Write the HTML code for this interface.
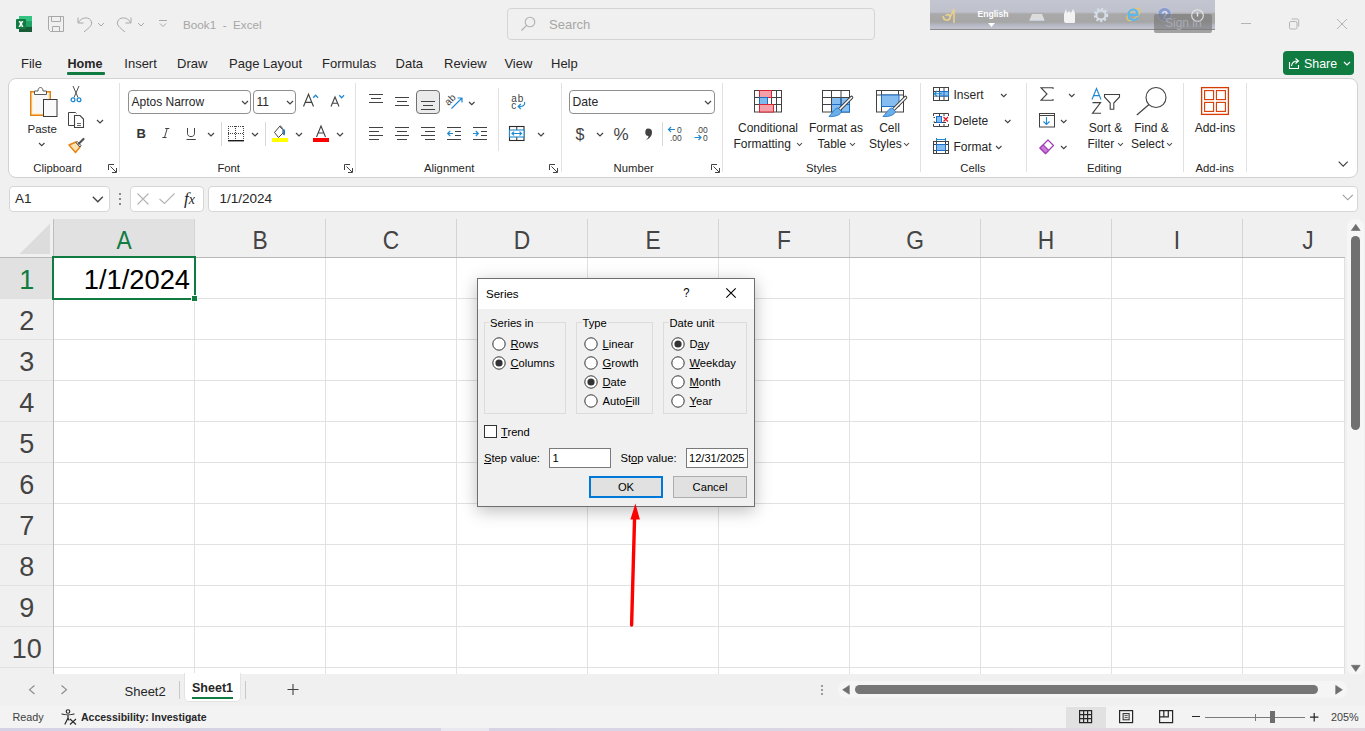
<!DOCTYPE html>
<html><head><meta charset="utf-8"><title>Excel</title>
<style>
html,body{margin:0;padding:0}
body{width:1365px;height:731px;overflow:hidden;position:relative;background:#f0f0f0;font-family:"Liberation Sans", sans-serif}
.t{position:absolute;white-space:nowrap;font-family:"Liberation Sans", sans-serif}
svg{overflow:visible}
</style></head><body>
<svg style="position:absolute;left:16px;top:16px" width="16" height="16" viewBox="0 0 16 16">
<rect x="3" y="0" width="13" height="16" rx="1" fill="#21a366"/>
<rect x="3" y="0" width="13" height="5.3" fill="#33c481"/>
<rect x="3" y="10.7" width="13" height="5.3" fill="#185c37"/>
<rect x="9.5" y="5.3" width="6.5" height="5.4" fill="#21a366"/>
<rect x="3" y="5.3" width="6.5" height="5.4" fill="#107c41"/>
<rect x="0" y="3" width="10" height="10" rx="1" fill="#107c41"/>
<path d="M2.6 5 L4.4 5 L5 6.6 L5.7 5 L7.4 5 L6 8 L7.5 11 L5.8 11 L5 9.3 L4.2 11 L2.5 11 L4 8 Z" fill="#fff"/>
</svg>
<svg style="position:absolute;left:48px;top:16px" width="16" height="16" viewBox="0 0 16 16">
<path d="M0.5 0.5 H15.5 V15.5 H2.5 L0.5 13.5 Z" fill="none" stroke="#a8a8a8" stroke-width="1"/>
<path d="M3.5 0.5 V5.5 H12.5 V0.5" fill="none" stroke="#a8a8a8" stroke-width="1"/>
<path d="M4.5 15.5 V10.5 H11.5 V15.5" fill="none" stroke="#a8a8a8" stroke-width="1"/>
</svg>
<svg style="position:absolute;left:77px;top:16px" width="16" height="16" viewBox="0 0 16 16">
<path d="M1 1.5 V7 H6.5" fill="none" stroke="#a8a8a8" stroke-width="1"/>
<path d="M1.5 6.5 C4 1 13 0 14.5 6 C15.3 9 13 11 7 16" fill="none" stroke="#a8a8a8" stroke-width="1"/>
</svg>
<svg style="position:absolute;left:97px;top:22px" width="8" height="5.0" viewBox="0 0 8 5.0"><path d="M1 1 L4.0 4.0 L7 1" fill="none" stroke="#a8a8a8" stroke-width="1"/></svg>
<svg style="position:absolute;left:116px;top:16px" width="16" height="16" viewBox="0 0 16 16">
<path d="M15 1.5 V7 H9.5" fill="none" stroke="#a8a8a8" stroke-width="1"/>
<path d="M14.5 6.5 C12 1 3 0 1.5 6 C0.7 9 3 11 9 16" fill="none" stroke="#a8a8a8" stroke-width="1"/>
</svg>
<svg style="position:absolute;left:137px;top:22px" width="8" height="5.0" viewBox="0 0 8 5.0"><path d="M1 1 L4.0 4.0 L7 1" fill="none" stroke="#a8a8a8" stroke-width="1"/></svg>
<svg style="position:absolute;left:158px;top:19px" width="10" height="10" viewBox="0 0 10 10">
<path d="M1 1.5 H9" stroke="#a8a8a8" stroke-width="1"/>
<path d="M2 4.5 L5 7.5 L8 4.5" fill="none" stroke="#a8a8a8" stroke-width="1"/>
</svg>
<div class="t" style="left:183.0px;top:18.6px;font-size:11.7px;line-height:11.7px;color:#a6a6a6;font-weight:normal;">Book1&nbsp;&nbsp;-&nbsp;&nbsp;Excel</div>
<div style="position:absolute;left:507px;top:8px;width:368px;height:32px;box-sizing:border-box;border:1px solid #d4d4d4;border-radius:4px;background:#f0f0f0"></div>
<svg style="position:absolute;left:520px;top:16px" width="16" height="16" viewBox="0 0 16 16">
<circle cx="10" cy="6" r="4.8" fill="none" stroke="#b0b0b0" stroke-width="1.1"/>
<path d="M6.6 9.4 L1.5 14.5" stroke="#b0b0b0" stroke-width="1.2"/>
</svg>
<div class="t" style="left:549.0px;top:18.0px;font-size:13px;line-height:13px;color:#a6a6a6;font-weight:normal;">Search</div>
<div style="position:absolute;left:1241px;top:23px;width:10px;height:1px;background:#b4b4b4"></div>
<svg style="position:absolute;left:1289px;top:18px" width="11" height="12" viewBox="0 0 11 12">
<rect x="0.5" y="3.5" width="7.5" height="7.5" rx="1.3" fill="none" stroke="#b4b4b4" stroke-width="1"/>
<path d="M2.5 1 H8 Q9.7 1 9.7 2.7 V8.5" fill="none" stroke="#b4b4b4" stroke-width="1"/>
</svg>
<svg style="position:absolute;left:1337px;top:19px" width="10" height="10" viewBox="0 0 10 10">
<path d="M0 0 L10 10 M10 0 L0 10" stroke="#b4b4b4" stroke-width="1"/>
</svg>
<div style="position:absolute;left:930px;top:0;width:285px;height:30px;background:linear-gradient(#c3c6d0 0px,#bfc2cc 12px,#a9a9a9 14px,#a6a6a6 22px,#b5b8c4 25px,#c0c3ce 28px);border-bottom:1px solid #8c8c8c;box-sizing:border-box"></div>
<svg style="position:absolute;left:941px;top:7px" width="15" height="16" viewBox="0 0 15 16"><path d="M2 9 C3 15 9 14 9 10 C9 7 5 7 5 9 M9 10 C11 7 12 5 12 3 M13 2 V16" fill="none" stroke="#ead08a" stroke-width="1.6"/></svg>
<div class="t" style="left:977.5px;top:9.7px;font-size:8.6px;line-height:8.6px;color:#ffffff;font-weight:bold;">English</div>
<svg style="position:absolute;left:988px;top:23px" width="8" height="5" viewBox="0 0 8 5"><path d="M0 0 H7 L3.5 4 Z" fill="#fff"/></svg>
<svg style="position:absolute;left:1029px;top:13px" width="16" height="9" viewBox="0 0 16 9"><path d="M3 1 H13 L15.5 7 H0.5 Z" fill="#dcdcdc"/><path d="M0.5 7.5 H15.5" stroke="#c4d0e0" stroke-width="1"/></svg>
<svg style="position:absolute;left:1063px;top:8px" width="13" height="16" viewBox="0 0 13 16"><path d="M3 1 L4 5 L6 3 L8 5 L10 1 L12 5 V14 Q12 15 11 15 H3 Q1 15 1 13 V6 Z" fill="#f2f2f2"/></svg>
<svg style="position:absolute;left:1093px;top:7px" width="16" height="16" viewBox="0 0 16 16"><circle cx="8" cy="8" r="5.5" fill="none" stroke="#d5dde6" stroke-width="3.5" stroke-dasharray="2 1.6"/><circle cx="8" cy="8" r="4.6" fill="none" stroke="#d5dde6" stroke-width="2"/></svg>
<svg style="position:absolute;left:1125px;top:6px" width="17" height="17" viewBox="0 0 17 17"><ellipse cx="8.5" cy="8.5" rx="8" ry="4" transform="rotate(-40 8.5 8.5)" fill="none" stroke="#e9c66a" stroke-width="1.3"/><path d="M3.5 9 H12.5 C12.5 5 10.5 3.5 8.3 3.5 C5.5 3.5 3.5 6 3.5 9 C3.5 12 5.5 14 8.3 14 C10.3 14 11.8 13 12.5 11.5" fill="none" stroke="#5bb8e8" stroke-width="2"/></svg>
<svg style="position:absolute;left:1157px;top:7px" width="15" height="15" viewBox="0 0 15 15"><circle cx="7.5" cy="7.5" r="7" fill="#8b9bc9" stroke="#c8d0e8" stroke-width="0.8"/><text x="7.5" y="11.5" text-anchor="middle" font-family="Liberation Sans" font-weight="bold" font-size="11" fill="#dfe4f2">?</text></svg>
<div style="position:absolute;left:1154px;top:14px;width:58px;height:19px;background:rgba(120,120,120,0.65);border-radius:2px"></div>
<svg style="position:absolute;left:1191px;top:9px" width="13" height="13" viewBox="0 0 13 13"><circle cx="6.5" cy="6.5" r="5.8" fill="none" stroke="#e8e8e8" stroke-width="1.1"/><path d="M6.5 3.5 V7.5" stroke="#e8e8e8" stroke-width="1.4"/></svg>
<div class="t" style="left:1165.0px;top:17.3px;font-size:12px;line-height:12px;color:#a9abb5;font-weight:normal;">Sign in</div>
<div class="t" style="left:21.0px;top:57.2px;font-size:13px;line-height:13px;color:#262626;font-weight:normal;">File</div>
<div class="t" style="left:67.5px;top:57.5px;font-size:12.6px;line-height:12.6px;color:#262626;font-weight:bold;">Home</div>
<div class="t" style="left:124.3px;top:57.2px;font-size:13px;line-height:13px;color:#262626;font-weight:normal;">Insert</div>
<div class="t" style="left:177.0px;top:57.2px;font-size:13px;line-height:13px;color:#262626;font-weight:normal;">Draw</div>
<div class="t" style="left:229.0px;top:57.2px;font-size:13px;line-height:13px;color:#262626;font-weight:normal;">Page Layout</div>
<div class="t" style="left:322.0px;top:57.2px;font-size:13px;line-height:13px;color:#262626;font-weight:normal;">Formulas</div>
<div class="t" style="left:395.6px;top:57.2px;font-size:13px;line-height:13px;color:#262626;font-weight:normal;">Data</div>
<div class="t" style="left:444.0px;top:57.2px;font-size:13px;line-height:13px;color:#262626;font-weight:normal;">Review</div>
<div class="t" style="left:504.4px;top:57.2px;font-size:13px;line-height:13px;color:#262626;font-weight:normal;">View</div>
<div class="t" style="left:551.0px;top:57.2px;font-size:13px;line-height:13px;color:#262626;font-weight:normal;">Help</div>
<div style="position:absolute;left:67px;top:72px;width:38px;height:3px;background:#107c41;border-radius:1px"></div>
<div style="position:absolute;left:1283px;top:51px;width:71px;height:24px;background:#107c41;border-radius:4px"></div>
<svg style="position:absolute;left:1287px;top:56px" width="14" height="14" viewBox="0 0 14 14">
<path d="M2.5 6 V12.5 H11.5 V9" fill="none" stroke="#fff" stroke-width="1.1"/>
<path d="M4.5 10 C5 6.5 7.5 5 10.5 5 M8.5 2.5 L11.5 5 L8.5 7.5" fill="none" stroke="#fff" stroke-width="1.1"/>
</svg>
<div class="t" style="left:1304.0px;top:57.5px;font-size:12.4px;line-height:12.4px;color:#ffffff;font-weight:normal;">Share</div>
<svg style="position:absolute;left:1342.5px;top:61px" width="8" height="5.0" viewBox="0 0 8 5.0"><path d="M1 1 L4.0 4.0 L7 1" fill="none" stroke="#ffffff" stroke-width="1.2"/></svg>
<div style="position:absolute;left:8px;top:78px;width:1350px;height:100px;box-sizing:border-box;background:#fff;border:1px solid #d2d2d2;border-radius:8px"></div>
<div style="position:absolute;left:119px;top:83px;width:1px;height:89px;background:#e1e1e1"></div>
<div style="position:absolute;left:355px;top:83px;width:1px;height:89px;background:#e1e1e1"></div>
<div style="position:absolute;left:561px;top:83px;width:1px;height:89px;background:#e1e1e1"></div>
<div style="position:absolute;left:722px;top:83px;width:1px;height:89px;background:#e1e1e1"></div>
<div style="position:absolute;left:920px;top:83px;width:1px;height:89px;background:#e1e1e1"></div>
<div style="position:absolute;left:1026px;top:83px;width:1px;height:89px;background:#e1e1e1"></div>
<div style="position:absolute;left:1183px;top:83px;width:1px;height:89px;background:#e1e1e1"></div>
<div style="position:absolute;left:1246px;top:83px;width:1px;height:89px;background:#e1e1e1"></div>
<div class="t" style="left:-142.5px;width:400px;text-align:center;top:162.7px;font-size:11.3px;line-height:11.3px;color:#262626;font-weight:normal;">Clipboard</div>
<div class="t" style="left:28.7px;width:400px;text-align:center;top:162.7px;font-size:11.3px;line-height:11.3px;color:#262626;font-weight:normal;">Font</div>
<div class="t" style="left:249.2px;width:400px;text-align:center;top:162.7px;font-size:11.3px;line-height:11.3px;color:#262626;font-weight:normal;">Alignment</div>
<div class="t" style="left:433.7px;width:400px;text-align:center;top:162.7px;font-size:11.3px;line-height:11.3px;color:#262626;font-weight:normal;">Number</div>
<div class="t" style="left:621.4px;width:400px;text-align:center;top:162.7px;font-size:11.3px;line-height:11.3px;color:#262626;font-weight:normal;">Styles</div>
<div class="t" style="left:772.9px;width:400px;text-align:center;top:162.7px;font-size:11.3px;line-height:11.3px;color:#262626;font-weight:normal;">Cells</div>
<div class="t" style="left:904.3px;width:400px;text-align:center;top:162.7px;font-size:11.3px;line-height:11.3px;color:#262626;font-weight:normal;">Editing</div>
<div class="t" style="left:1014.7px;width:400px;text-align:center;top:162.7px;font-size:11.3px;line-height:11.3px;color:#262626;font-weight:normal;">Add-ins</div>
<svg style="position:absolute;left:108px;top:164px" width="9" height="9" viewBox="0 0 9 9"><path d="M0.5 6 V0.5 H6" fill="none" stroke="#424242" stroke-width="1"/><path d="M2.5 2.5 L8 8 M8.5 4 V8.5 H4" fill="none" stroke="#424242" stroke-width="1"/></svg>
<svg style="position:absolute;left:344px;top:164px" width="9" height="9" viewBox="0 0 9 9"><path d="M0.5 6 V0.5 H6" fill="none" stroke="#424242" stroke-width="1"/><path d="M2.5 2.5 L8 8 M8.5 4 V8.5 H4" fill="none" stroke="#424242" stroke-width="1"/></svg>
<svg style="position:absolute;left:549px;top:164px" width="9" height="9" viewBox="0 0 9 9"><path d="M0.5 6 V0.5 H6" fill="none" stroke="#424242" stroke-width="1"/><path d="M2.5 2.5 L8 8 M8.5 4 V8.5 H4" fill="none" stroke="#424242" stroke-width="1"/></svg>
<svg style="position:absolute;left:711px;top:164px" width="9" height="9" viewBox="0 0 9 9"><path d="M0.5 6 V0.5 H6" fill="none" stroke="#424242" stroke-width="1"/><path d="M2.5 2.5 L8 8 M8.5 4 V8.5 H4" fill="none" stroke="#424242" stroke-width="1"/></svg>
<svg style="position:absolute;left:30px;top:87px" width="28" height="30" viewBox="0 0 28 30">
<rect x="0.75" y="4.75" width="19.5" height="23.5" fill="#fdf1d0" stroke="#e8820f" stroke-width="1.5"/>
<rect x="3" y="7" width="15" height="19" fill="#f8f8f8"/>
<path d="M4.5 7.5 V4 H8 C8 1.5 9.3 0.5 10.5 0.5 C11.7 0.5 13 1.5 13 4 H16.5 V7.5 Z" fill="#fff" stroke="#5a5a5a" stroke-width="1"/>
<rect x="13.5" y="12.5" width="13.5" height="17" fill="#fafafa" stroke="#3a3a3a" stroke-width="1"/>
</svg>
<div class="t" style="left:27.5px;top:123.6px;font-size:11.5px;line-height:11.5px;color:#262626;font-weight:normal;">Paste</div>
<svg style="position:absolute;left:37.5px;top:141.5px" width="7.5" height="4.75" viewBox="0 0 7.5 4.75"><path d="M1 1 L3.75 3.75 L6.5 1" fill="none" stroke="#424242" stroke-width="1.1"/></svg>
<svg style="position:absolute;left:69px;top:86px" width="14" height="16" viewBox="0 0 14 16">
<path d="M4 0 L9 11.5 M10 0 L5 11.5" stroke="#505050" stroke-width="1"/>
<circle cx="4" cy="13.8" r="1.9" fill="none" stroke="#1f8ad2" stroke-width="1.3"/>
<circle cx="10" cy="13.8" r="1.9" fill="none" stroke="#1f8ad2" stroke-width="1.3"/>
</svg>
<svg style="position:absolute;left:68px;top:112px" width="17" height="17" viewBox="0 0 17 17">
<path d="M6.5 13.5 H0.5 V0.5 H7.5 L8.5 1.5" fill="none" stroke="#424242" stroke-width="1"/>
<path d="M6.5 15.5 V3.5 H12 L15.5 7 V15.5 Z" fill="#fff" stroke="#424242" stroke-width="1.1"/>
<path d="M9 11.5 H13 M9 13.5 H13" stroke="#424242" stroke-width="0.8"/>
</svg>
<svg style="position:absolute;left:96px;top:119px" width="8" height="5.0" viewBox="0 0 8 5.0"><path d="M1 1 L4.0 4.0 L7 1" fill="none" stroke="#424242" stroke-width="1.2"/></svg>
<svg style="position:absolute;left:68px;top:138px" width="17" height="16" viewBox="0 0 17 16">
<path d="M1 7 L7.5 14.5 L12 9 L8 4 Z" fill="#fbe3b5" stroke="#e8820f" stroke-width="1.4" stroke-linejoin="round"/>
<path d="M8 4.5 L12 9 L13 7.5 L9.3 3.5 Z" fill="#fff" stroke="#505050" stroke-width="1"/>
<path d="M11 5.5 L15.5 1" stroke="#505050" stroke-width="2.2" stroke-linecap="round"/>
</svg>
<div style="position:absolute;left:128px;top:90px;width:123px;height:24px;box-sizing:border-box;border:1px solid #8f8f8f;border-radius:4px;background:#fff"></div>
<div class="t" style="left:131.5px;top:96.3px;font-size:12px;line-height:12px;color:#262626;font-weight:normal;">Aptos Narrow</div>
<svg style="position:absolute;left:241px;top:100px" width="8" height="5.0" viewBox="0 0 8 5.0"><path d="M1 1 L4.0 4.0 L7 1" fill="none" stroke="#424242" stroke-width="1.2"/></svg>
<div style="position:absolute;left:253px;top:90px;width:43px;height:24px;box-sizing:border-box;border:1px solid #8f8f8f;border-radius:4px;background:#fff"></div>
<div class="t" style="left:256.5px;top:96.3px;font-size:12px;line-height:12px;color:#262626;font-weight:normal;">11</div>
<svg style="position:absolute;left:285.5px;top:100px" width="8" height="5.0" viewBox="0 0 8 5.0"><path d="M1 1 L4.0 4.0 L7 1" fill="none" stroke="#424242" stroke-width="1.2"/></svg>
<svg style="position:absolute;left:300px;top:92px" width="48" height="16" viewBox="0 0 48 16">
<path d="M3.5 14.5 L8.5 2.3 L13.5 14.5 M5.3 10.3 H11.7" fill="none" stroke="#424242" stroke-width="1.15"/>
<path d="M13.2 5.8 L15.6 3.3 L18 5.8" fill="none" stroke="#1f8ad2" stroke-width="1.3"/>
<path d="M31 14.5 L35 5 L39 14.5 M32.5 11.3 H37.5" fill="none" stroke="#424242" stroke-width="1.1"/>
<path d="M39.2 3.3 L41.6 5.8 L44 3.3" fill="none" stroke="#1f8ad2" stroke-width="1.3"/>
</svg>
<div class="t" style="left:136.5px;top:126.9px;font-size:13px;line-height:13px;color:#333333;font-weight:bold;">B</div>
<svg style="position:absolute;left:162px;top:128px" width="8" height="10" viewBox="0 0 8 10"><path d="M3.2 0.5 H7.3 M0.4 9.5 H4.5 M5.2 0.5 L2.5 9.5" fill="none" stroke="#424242" stroke-width="1"/></svg>
<svg style="position:absolute;left:186px;top:128px" width="11" height="13" viewBox="0 0 11 13"><path d="M1.5 0 V5.3 C1.5 7.6 3 8.6 5 8.6 C7 8.6 8.5 7.6 8.5 5.3 V0" fill="none" stroke="#424242" stroke-width="1"/><path d="M0.5 11.5 H9.8" stroke="#424242" stroke-width="1"/></svg>
<svg style="position:absolute;left:207px;top:132px" width="8" height="5.0" viewBox="0 0 8 5.0"><path d="M1 1 L4.0 4.0 L7 1" fill="none" stroke="#424242" stroke-width="1.2"/></svg>
<div style="position:absolute;left:221px;top:122px;width:1px;height:24px;background:#d8d8d8"></div>
<svg style="position:absolute;left:228px;top:126px" width="16" height="16" viewBox="0 0 16 16"><rect x="0" y="0" width="1" height="1" fill="#424242"/><rect x="0" y="0" width="1" height="1" fill="#424242"/><rect x="15" y="0" width="1" height="1" fill="#424242"/><rect x="0" y="7" width="1" height="1" fill="#424242"/><rect x="7" y="0" width="1" height="1" fill="#424242"/><rect x="2" y="0" width="1" height="1" fill="#424242"/><rect x="0" y="2" width="1" height="1" fill="#424242"/><rect x="15" y="2" width="1" height="1" fill="#424242"/><rect x="2" y="7" width="1" height="1" fill="#424242"/><rect x="7" y="2" width="1" height="1" fill="#424242"/><rect x="4" y="0" width="1" height="1" fill="#424242"/><rect x="0" y="4" width="1" height="1" fill="#424242"/><rect x="15" y="4" width="1" height="1" fill="#424242"/><rect x="4" y="7" width="1" height="1" fill="#424242"/><rect x="7" y="4" width="1" height="1" fill="#424242"/><rect x="6" y="0" width="1" height="1" fill="#424242"/><rect x="0" y="6" width="1" height="1" fill="#424242"/><rect x="15" y="6" width="1" height="1" fill="#424242"/><rect x="6" y="7" width="1" height="1" fill="#424242"/><rect x="7" y="6" width="1" height="1" fill="#424242"/><rect x="8" y="0" width="1" height="1" fill="#424242"/><rect x="0" y="8" width="1" height="1" fill="#424242"/><rect x="15" y="8" width="1" height="1" fill="#424242"/><rect x="8" y="7" width="1" height="1" fill="#424242"/><rect x="7" y="8" width="1" height="1" fill="#424242"/><rect x="10" y="0" width="1" height="1" fill="#424242"/><rect x="0" y="10" width="1" height="1" fill="#424242"/><rect x="15" y="10" width="1" height="1" fill="#424242"/><rect x="10" y="7" width="1" height="1" fill="#424242"/><rect x="7" y="10" width="1" height="1" fill="#424242"/><rect x="12" y="0" width="1" height="1" fill="#424242"/><rect x="0" y="12" width="1" height="1" fill="#424242"/><rect x="15" y="12" width="1" height="1" fill="#424242"/><rect x="12" y="7" width="1" height="1" fill="#424242"/><rect x="7" y="12" width="1" height="1" fill="#424242"/><rect x="14" y="0" width="1" height="1" fill="#424242"/><rect x="0" y="14" width="1" height="1" fill="#424242"/><rect x="15" y="14" width="1" height="1" fill="#424242"/><rect x="14" y="7" width="1" height="1" fill="#424242"/><rect x="7" y="14" width="1" height="1" fill="#424242"/><rect x="0" y="14" width="16" height="1.4" fill="#1a1a1a"/></svg>
<svg style="position:absolute;left:251px;top:132px" width="8" height="5.0" viewBox="0 0 8 5.0"><path d="M1 1 L4.0 4.0 L7 1" fill="none" stroke="#424242" stroke-width="1.2"/></svg>
<div style="position:absolute;left:265px;top:122px;width:1px;height:24px;background:#d8d8d8"></div>
<svg style="position:absolute;left:271px;top:125px" width="18" height="18" viewBox="0 0 18 18">
<path d="M3.5 7.5 L8.5 1.5 L12 4.5 L12 8 L7.5 12.5 Z" fill="#fff" stroke="#424242" stroke-width="1" stroke-linejoin="round"/>
<path d="M8.2 1.5 C9.8 0.5 11 1.5 11 4" fill="none" stroke="#424242" stroke-width="1"/>
<path d="M12.8 10 C13.5 7 13.6 5.5 12.3 4.5" fill="none" stroke="#1f6fc4" stroke-width="1.8"/>
<rect x="1" y="13" width="16" height="4" fill="#ffff00"/>
</svg>
<svg style="position:absolute;left:295px;top:132px" width="8" height="5.0" viewBox="0 0 8 5.0"><path d="M1 1 L4.0 4.0 L7 1" fill="none" stroke="#424242" stroke-width="1.2"/></svg>
<svg style="position:absolute;left:313px;top:125px" width="16" height="18" viewBox="0 0 16 18"><path d="M3.5 12 L8 1 L12.5 12 M5.2 8 H10.8" fill="none" stroke="#424242" stroke-width="1.1"/><rect x="0" y="13" width="16" height="4" fill="#ff0000"/></svg>
<svg style="position:absolute;left:336px;top:132px" width="8" height="5.0" viewBox="0 0 8 5.0"><path d="M1 1 L4.0 4.0 L7 1" fill="none" stroke="#424242" stroke-width="1.2"/></svg>
<svg style="position:absolute;left:369px;top:93px" width="15" height="10" viewBox="0 0 15 10"><path d="M0 1.5 H14 M2 5.5 H12 M0 9.5 H14" stroke="#424242" stroke-width="1.1"/></svg>
<svg style="position:absolute;left:395px;top:97px" width="15" height="10" viewBox="0 0 15 10"><path d="M0 0.5 H14 M2 4.5 H12 M0 8.5 H14" stroke="#424242" stroke-width="1.1"/></svg>
<div style="position:absolute;left:416px;top:90px;width:24px;height:24px;box-sizing:border-box;border:1px solid #707070;border-radius:4px;background:#ebebeb"></div>
<svg style="position:absolute;left:421px;top:100px" width="15" height="10" viewBox="0 0 15 10"><path d="M0 1.5 H14 M2 5.5 H12 M0 9.5 H14" stroke="#424242" stroke-width="1.1"/></svg>
<svg style="position:absolute;left:445px;top:92px" width="18" height="18" viewBox="0 0 18 18">
<text x="0" y="0" transform="translate(3.5 14) rotate(-45)" font-family="Liberation Sans" font-size="10" fill="#424242">ab</text>
<path d="M6.5 16.5 L16.5 6.5 M12.5 6 H17 V10.5" fill="none" stroke="#1f8ad2" stroke-width="1.2"/>
</svg>
<svg style="position:absolute;left:468px;top:100.5px" width="7.5" height="4.75" viewBox="0 0 7.5 4.75"><path d="M1 1 L3.75 3.75 L6.5 1" fill="none" stroke="#424242" stroke-width="1.2"/></svg>
<svg style="position:absolute;left:369px;top:127px" width="15" height="14" viewBox="0 0 15 14"><path d="M0 0.5 H14 M0 4.5 H10 M0 8.5 H14 M0 12.5 H10" stroke="#424242" stroke-width="1.1"/></svg>
<svg style="position:absolute;left:395px;top:127px" width="15" height="14" viewBox="0 0 15 14"><path d="M0 0.5 H14 M2 4.5 H12 M0 8.5 H14 M2 12.5 H12" stroke="#424242" stroke-width="1.1"/></svg>
<svg style="position:absolute;left:421px;top:127px" width="15" height="14" viewBox="0 0 15 14"><path d="M0 0.5 H14 M4 4.5 H14 M0 8.5 H14 M4 12.5 H14" stroke="#424242" stroke-width="1.1"/></svg>
<svg style="position:absolute;left:447px;top:127px" width="15" height="14" viewBox="0 0 15 14"><path d="M0 0.5 H14 M8 4.5 H14 M8 8.5 H14 M0 12.5 H14" stroke="#424242" stroke-width="1.1"/><path d="M6 6.5 H0.8 M3.2 4 L0.7 6.5 L3.2 9" fill="none" stroke="#1f8ad2" stroke-width="1.2"/></svg>
<svg style="position:absolute;left:473px;top:127px" width="15" height="14" viewBox="0 0 15 14"><path d="M0 0.5 H14 M8 4.5 H14 M8 8.5 H14 M0 12.5 H14" stroke="#424242" stroke-width="1.1"/><path d="M0 6.5 H5.2 M2.8 4 L5.3 6.5 L2.8 9" fill="none" stroke="#1f8ad2" stroke-width="1.2"/></svg>
<div style="position:absolute;left:498px;top:88px;width:1px;height:63px;background:#e1e1e1"></div>
<svg style="position:absolute;left:509px;top:92px" width="18" height="20" viewBox="0 0 18 20">
<text x="2.3" y="9.5" font-family="Liberation Sans" font-size="10" letter-spacing="0.8" fill="#424242">ab</text>
<text x="2.3" y="16.8" font-family="Liberation Sans" font-size="10" fill="#424242">c</text>
<path d="M15.5 10 C16.5 13 14 15 9.5 14.5 M11.8 12 L9.2 14.5 L11.8 17.2" fill="none" stroke="#1f8ad2" stroke-width="1.2"/>
</svg>
<svg style="position:absolute;left:509px;top:126px" width="16" height="16" viewBox="0 0 16 16">
<rect x="0.5" y="0.5" width="14.5" height="14" fill="#fff" stroke="#2b2b2b" stroke-width="1.1"/>
<path d="M7.75 0.5 V4 M7.75 11 V14.5" stroke="#2b2b2b" stroke-width="1"/>
<rect x="0.5" y="4" width="14.5" height="7" fill="#fff" stroke="#1f8ad2" stroke-width="1.1"/>
<path d="M3 7.5 H12.5 M5 5.6 L3 7.5 L5 9.4 M10.5 5.6 L12.5 7.5 L10.5 9.4" fill="none" stroke="#1f8ad2" stroke-width="1.2"/>
</svg>
<svg style="position:absolute;left:537px;top:132px" width="8" height="5.0" viewBox="0 0 8 5.0"><path d="M1 1 L4.0 4.0 L7 1" fill="none" stroke="#424242" stroke-width="1.2"/></svg>
<div style="position:absolute;left:569px;top:90px;width:146px;height:24px;box-sizing:border-box;border:1px solid #8f8f8f;border-radius:4px;background:#fff"></div>
<div class="t" style="left:572.5px;top:96.4px;font-size:12.2px;line-height:12.2px;color:#262626;font-weight:normal;">Date</div>
<svg style="position:absolute;left:704px;top:100px" width="8" height="5.0" viewBox="0 0 8 5.0"><path d="M1 1 L4.0 4.0 L7 1" fill="none" stroke="#424242" stroke-width="1.2"/></svg>
<div class="t" style="left:575.5px;top:126.5px;font-size:16px;line-height:16px;color:#424242;font-weight:normal;">$</div>
<svg style="position:absolute;left:596px;top:132px" width="8" height="5.0" viewBox="0 0 8 5.0"><path d="M1 1 L4.0 4.0 L7 1" fill="none" stroke="#424242" stroke-width="1.2"/></svg>
<div class="t" style="left:613.5px;top:126.1px;font-size:17px;line-height:17px;color:#424242;font-weight:normal;">%</div>
<svg style="position:absolute;left:643px;top:127px" width="10" height="14" viewBox="0 0 10 14"><path d="M5 1.5 C8 1.5 9 3 9 5.5 C9 9 6.5 11.5 3 13 C5 11 5.5 10 5.5 9 C3.5 9 2.3 8 2.3 5.5 C2.3 3 3.3 1.5 5 1.5 Z" fill="#424242"/></svg>
<div style="position:absolute;left:662px;top:122px;width:1px;height:24px;background:#d8d8d8"></div>
<svg style="position:absolute;left:667px;top:125px" width="18" height="17" viewBox="0 0 18 17">
<path d="M8 4.5 H1.5 M4 2 L1.5 4.5 L4 7" fill="none" stroke="#1f8ad2" stroke-width="1.2"/>
<text x="10" y="8" font-family="Liberation Sans" font-size="8.5" fill="#424242">0</text>
<text x="3" y="16" font-family="Liberation Sans" font-size="8.5" fill="#424242">.00</text>
</svg>
<svg style="position:absolute;left:693px;top:125px" width="18" height="17" viewBox="0 0 18 17">
<text x="3" y="8" font-family="Liberation Sans" font-size="8.5" fill="#424242">.00</text>
<path d="M1.5 12.5 H8 M5.5 10 L8 12.5 L5.5 15" fill="none" stroke="#1f8ad2" stroke-width="1.2"/>
<text x="10" y="16" font-family="Liberation Sans" font-size="8.5" fill="#424242">0</text>
</svg>
<svg style="position:absolute;left:740px;top:85px" width="180" height="36" viewBox="0 0 180 36">
<rect x="14.5" y="5.5" width="27" height="21.5" fill="#fff" stroke="#424242" stroke-width="1"/>
<path d="M14.5 12.5 H41.5 M14.5 19.5 H41.5 M19.5 5.5 V27 M31.5 5.5 V27 M36.5 5.5 V27" fill="none" stroke="#424242" stroke-width="1"/>
<rect x="19.5" y="5.5" width="12" height="7" fill="#f4a0aa" stroke="#d9262f" stroke-width="1"/>
<rect x="19.5" y="12.5" width="8" height="7" fill="#7fb9ea" stroke="#1a6fc9" stroke-width="1"/>
<rect x="19.5" y="19.5" width="14" height="7.5" fill="#f4a0aa" stroke="#d9262f" stroke-width="1"/>
<rect x="82.5" y="5.5" width="27" height="21.5" fill="#fff" stroke="#424242" stroke-width="1"/>
<rect x="91.5" y="12.5" width="18" height="14.5" fill="#86bdf0" stroke="#1a6fc9" stroke-width="1"/>
<path d="M82.5 12.5 H109.5 M82.5 19.5 H109.5 M91.5 5.5 V27 M101 5.5 V27" fill="none" stroke="#424242" stroke-width="1"/>
<path d="M91.5 19.5 H109.5 M101 12.5 V27" fill="none" stroke="#1a6fc9" stroke-width="1"/>
<path d="M111.5 12.5 L99.5 24.5" stroke="#424242" stroke-width="3.6" stroke-linecap="round"/>
<path d="M111.5 12.5 L99.5 24.5" stroke="#fff" stroke-width="1.6" stroke-linecap="round"/>
<path d="M98 23 C95 23 94 26 89 31.5 C95 32 100.5 30 101.5 26.5 Z" fill="#6aaee8" stroke="#1a6fc9" stroke-width="0.8"/>
<rect x="136.5" y="5.5" width="27" height="21.5" fill="#fff" stroke="#424242" stroke-width="1"/>
<path d="M136.5 10 H163.5 M141.5 5.5 V27 M158.5 5.5 V10" fill="none" stroke="#424242" stroke-width="1"/>
<rect x="141.5" y="10" width="17.5" height="11.5" fill="#86bdf0" stroke="#1a6fc9" stroke-width="1"/>
<path d="M165.5 12.5 L153.5 24.5" stroke="#424242" stroke-width="3.6" stroke-linecap="round"/>
<path d="M165.5 12.5 L153.5 24.5" stroke="#fff" stroke-width="1.6" stroke-linecap="round"/>
<path d="M152 23 C149 23 148 26 143 31.5 C149 32 154.5 30 155.5 26.5 Z" fill="#6aaee8" stroke="#1a6fc9" stroke-width="0.8"/>
</svg>
<div class="t" style="left:568.0px;width:400px;text-align:center;top:121.8px;font-size:12px;line-height:12px;color:#262626;font-weight:normal;">Conditional</div>
<div class="t" style="left:733.5px;top:137.8px;font-size:12px;line-height:12px;color:#262626;font-weight:normal;">Formatting</div>
<svg style="position:absolute;left:796px;top:141.5px" width="7" height="4.5" viewBox="0 0 7 4.5"><path d="M1 1 L3.5 3.5 L6 1" fill="none" stroke="#424242" stroke-width="1.05"/></svg>
<div class="t" style="left:636.0px;width:400px;text-align:center;top:121.8px;font-size:12px;line-height:12px;color:#262626;font-weight:normal;">Format as</div>
<div class="t" style="left:817.5px;top:137.8px;font-size:12px;line-height:12px;color:#262626;font-weight:normal;">Table</div>
<svg style="position:absolute;left:848.5px;top:141.5px" width="7" height="4.5" viewBox="0 0 7 4.5"><path d="M1 1 L3.5 3.5 L6 1" fill="none" stroke="#424242" stroke-width="1.05"/></svg>
<div class="t" style="left:689.5px;width:400px;text-align:center;top:121.8px;font-size:12px;line-height:12px;color:#262626;font-weight:normal;">Cell</div>
<div class="t" style="left:869.0px;top:137.8px;font-size:12px;line-height:12px;color:#262626;font-weight:normal;">Styles</div>
<svg style="position:absolute;left:902.5px;top:141.5px" width="7" height="4.5" viewBox="0 0 7 4.5"><path d="M1 1 L3.5 3.5 L6 1" fill="none" stroke="#424242" stroke-width="1.05"/></svg>
<svg style="position:absolute;left:933px;top:87px" width="17" height="15" viewBox="0 0 17 15">
<rect x="0.5" y="0.5" width="15" height="13" fill="#fff" stroke="#424242" stroke-width="1"/>
<path d="M0.5 4.5 H15.5 M0.5 9 H15.5 M6.5 0.5 V13.5 M11 0.5 V13.5" fill="none" stroke="#424242" stroke-width="1"/>
<rect x="6.5" y="4.5" width="9" height="4.5" fill="#86bdf0" stroke="#1a6fc9" stroke-width="1"/>
<path d="M11 4.5 V9" stroke="#1a6fc9" stroke-width="1"/>
<rect x="1" y="5" width="5" height="3.5" fill="#fff"/>
<path d="M9 6.75 H1.5 M4.2 4 L1.3 6.75 L4.2 9.5" fill="none" stroke="#1f8ad2" stroke-width="1.2"/>
</svg>
<div class="t" style="left:953.5px;top:89.3px;font-size:12px;line-height:12px;color:#262626;font-weight:normal;">Insert</div>
<svg style="position:absolute;left:999.5px;top:92.5px" width="7.5" height="4.75" viewBox="0 0 7.5 4.75"><path d="M1 1 L3.75 3.75 L6.5 1" fill="none" stroke="#424242" stroke-width="1.1"/></svg>
<svg style="position:absolute;left:933px;top:113px" width="17" height="15" viewBox="0 0 17 15">
<path d="M0.5 0.5 H15.5 M0.5 13.5 H15.5 M0.5 0.5 V3 M0.5 11 V13.5 M15.5 0.5 V3 M15.5 11 V13.5 M0.5 4.5 H2 M0.5 9 H2 M6.5 0.5 V3 M11 0.5 V3 M6.5 11 V13.5 M11 11 V13.5" fill="none" stroke="#424242" stroke-width="1"/>
<path d="M1 9.5 H13 M1 4.5 H2" fill="none" stroke="#424242" stroke-width="1"/>
<rect x="3.5" y="3.5" width="5" height="6" fill="#86bdf0" stroke="#1a6fc9" stroke-width="1"/>
<path d="M10.5 4 L15 8.5 M15 4 L10.5 8.5" stroke="#e81123" stroke-width="1.1"/>
</svg>
<div class="t" style="left:953.5px;top:115.1px;font-size:12px;line-height:12px;color:#262626;font-weight:normal;">Delete</div>
<svg style="position:absolute;left:1003.5px;top:118.5px" width="7.5" height="4.75" viewBox="0 0 7.5 4.75"><path d="M1 1 L3.75 3.75 L6.5 1" fill="none" stroke="#424242" stroke-width="1.1"/></svg>
<svg style="position:absolute;left:933px;top:138px" width="17" height="17" viewBox="0 0 17 17">
<path d="M3.5 1.5 H12.5 M3.5 0 V3 M12.5 0 V3" stroke="#1f8ad2" stroke-width="1"/>
<rect x="0.5" y="3.5" width="15" height="12" fill="#fff" stroke="#424242" stroke-width="1"/>
<path d="M0.5 6.5 H15.5 M0.5 12.5 H15.5 M3.5 3.5 V15.5 M12.5 3.5 V15.5" fill="none" stroke="#424242" stroke-width="1"/>
<rect x="3.5" y="6.5" width="9" height="6" fill="#86bdf0" stroke="#1a6fc9" stroke-width="1"/>
</svg>
<div class="t" style="left:953.5px;top:140.8px;font-size:12px;line-height:12px;color:#262626;font-weight:normal;">Format</div>
<svg style="position:absolute;left:994.5px;top:144.5px" width="7.5" height="4.75" viewBox="0 0 7.5 4.75"><path d="M1 1 L3.75 3.75 L6.5 1" fill="none" stroke="#424242" stroke-width="1.1"/></svg>
<svg style="position:absolute;left:1040px;top:87px" width="14" height="14" viewBox="0 0 14 14"><path d="M13 2 V0.7 H1 L7 7 L1 13.3 H13 V12" fill="none" stroke="#424242" stroke-width="1.1" stroke-linejoin="miter"/></svg>
<svg style="position:absolute;left:1067.5px;top:92.5px" width="7.5" height="4.75" viewBox="0 0 7.5 4.75"><path d="M1 1 L3.75 3.75 L6.5 1" fill="none" stroke="#424242" stroke-width="1.1"/></svg>
<svg style="position:absolute;left:1039px;top:113px" width="17" height="15" viewBox="0 0 17 15">
<rect x="0.5" y="0.5" width="15" height="13.5" fill="#fff" stroke="#424242" stroke-width="1"/>
<path d="M0.5 2.5 H15.5" stroke="#424242" stroke-width="1"/>
<path d="M7.5 4 V11.5 M4.5 8.5 L7.5 11.5 L10.5 8.5" fill="none" stroke="#1f8ad2" stroke-width="1.1"/>
</svg>
<svg style="position:absolute;left:1060px;top:118.5px" width="7.5" height="4.75" viewBox="0 0 7.5 4.75"><path d="M1 1 L3.75 3.75 L6.5 1" fill="none" stroke="#424242" stroke-width="1.1"/></svg>
<svg style="position:absolute;left:1039px;top:138px" width="17" height="17" viewBox="0 0 17 17">
<path d="M1 10 L9 2 L14.5 7.5 L6.5 15.5 Z" fill="#fff" stroke="#a33eb8" stroke-width="1.2" stroke-linejoin="round"/>
<path d="M1 10 L4.2 6.8 L9.7 12.3 L6.5 15.5 Z" fill="#c77dd8" stroke="#a33eb8" stroke-width="1.2" stroke-linejoin="round"/>
</svg>
<svg style="position:absolute;left:1060px;top:144.5px" width="7.5" height="4.75" viewBox="0 0 7.5 4.75"><path d="M1 1 L3.75 3.75 L6.5 1" fill="none" stroke="#424242" stroke-width="1.1"/></svg>
<svg style="position:absolute;left:1088px;top:86px" width="34" height="30" viewBox="0 0 34 30">
<path d="M4 13.5 L8.5 2.5 L13 13.5 M5.6 9.6 H11.4" fill="none" stroke="#1f8ad2" stroke-width="1.15"/>
<path d="M4.5 16.6 H12.6 L4.5 27.3 H13" fill="none" stroke="#424242" stroke-width="1.1"/>
<path d="M16.5 8.5 H31.5 V11 L25.8 17 V23.3 H22.2 V17 L16.5 11 Z" fill="#fff" stroke="#424242" stroke-width="1.1" stroke-linejoin="miter"/>
</svg>
<div class="t" style="left:905.5px;width:400px;text-align:center;top:122.3px;font-size:12px;line-height:12px;color:#262626;font-weight:normal;">Sort &amp;</div>
<div class="t" style="left:1087.5px;top:137.8px;font-size:12px;line-height:12px;color:#262626;font-weight:normal;">Filter</div>
<svg style="position:absolute;left:1117px;top:141.5px" width="7" height="4.5" viewBox="0 0 7 4.5"><path d="M1 1 L3.5 3.5 L6 1" fill="none" stroke="#424242" stroke-width="1.05"/></svg>
<svg style="position:absolute;left:1136px;top:86px" width="31" height="30" viewBox="0 0 31 30">
<circle cx="20" cy="11.5" r="10" fill="#fff" stroke="#424242" stroke-width="1.1"/>
<path d="M13 18.5 L0.8 29" stroke="#424242" stroke-width="1.2"/>
</svg>
<div class="t" style="left:951.5px;width:400px;text-align:center;top:122.3px;font-size:12px;line-height:12px;color:#262626;font-weight:normal;">Find &amp;</div>
<div class="t" style="left:1131.0px;top:137.8px;font-size:12px;line-height:12px;color:#262626;font-weight:normal;">Select</div>
<svg style="position:absolute;left:1165.5px;top:141.5px" width="7" height="4.5" viewBox="0 0 7 4.5"><path d="M1 1 L3.5 3.5 L6 1" fill="none" stroke="#424242" stroke-width="1.05"/></svg>
<svg style="position:absolute;left:1200px;top:86px" width="30" height="30" viewBox="0 0 30 30">
<rect x="1.6" y="1.6" width="26.8" height="26.8" fill="none" stroke="#d83b01" stroke-width="1.3"/>
<rect x="4.6" y="4.6" width="9" height="9" fill="none" stroke="#d83b01" stroke-width="1.1"/>
<rect x="16.4" y="4.6" width="9" height="9" fill="none" stroke="#d83b01" stroke-width="1.1"/>
<rect x="4.6" y="16.4" width="9" height="9" fill="none" stroke="#d83b01" stroke-width="1.1"/>
<rect x="16.4" y="16.4" width="9" height="9" fill="none" stroke="#d83b01" stroke-width="1.1"/>
</svg>
<div class="t" style="left:1015.0px;width:400px;text-align:center;top:122.3px;font-size:12px;line-height:12px;color:#262626;font-weight:normal;">Add-ins</div>
<svg style="position:absolute;left:1338px;top:161px" width="11" height="7" viewBox="0 0 11 7"><path d="M0.7 0.7 L5.2 5.2 L9.7 0.7" fill="none" stroke="#424242" stroke-width="1.2"/></svg>
<div style="position:absolute;left:9px;top:186px;width:101px;height:26px;box-sizing:border-box;background:#fff;border:1px solid #d6d6d6;border-radius:4px"></div>
<div class="t" style="left:15.0px;top:192.4px;font-size:13.5px;line-height:13.5px;color:#262626;font-weight:normal;">A1</div>
<svg style="position:absolute;left:92px;top:196px" width="12" height="7" viewBox="0 0 12 7"><path d="M0.8 0.8 L5.8 5.8 L10.8 0.8" fill="none" stroke="#424242" stroke-width="1.3"/></svg>
<div style="position:absolute;left:119px;top:193px;width:2px;height:2px;background:#8a8a8a"></div>
<div style="position:absolute;left:119px;top:198px;width:2px;height:2px;background:#8a8a8a"></div>
<div style="position:absolute;left:119px;top:203px;width:2px;height:2px;background:#8a8a8a"></div>
<div style="position:absolute;left:130px;top:186px;width:74px;height:26px;box-sizing:border-box;background:#fff;border:1px solid #d6d6d6;border-radius:4px"></div>
<svg style="position:absolute;left:137px;top:193px" width="12" height="12" viewBox="0 0 12 12"><path d="M0.5 0.5 L11.5 11.5 M11.5 0.5 L0.5 11.5" stroke="#b4b4b4" stroke-width="1.1"/></svg>
<svg style="position:absolute;left:159px;top:193px" width="16" height="11" viewBox="0 0 16 11"><path d="M0.5 6 L5.5 10.5 L15.5 0.5" fill="none" stroke="#b4b4b4" stroke-width="1.1"/></svg>
<div class="t" style="left:184.0px;top:189.6px;font-size:17px;line-height:17px;color:#262626;font-weight:normal;font-family:Liberation Serif,serif"><i>f</i><i style="font-size:14px">x</i></div>
<div style="position:absolute;left:208px;top:186px;width:1150px;height:26px;box-sizing:border-box;background:#fff;border:1px solid #d6d6d6;border-radius:4px"></div>
<div class="t" style="left:219.5px;top:192.4px;font-size:13.5px;line-height:13.5px;color:#262626;font-weight:normal;">1/1/2024</div>
<svg style="position:absolute;left:1342px;top:194px" width="12" height="7" viewBox="0 0 12 7"><path d="M0.8 0.8 L5.8 5.8 L10.8 0.8" fill="none" stroke="#9a9a9a" stroke-width="1.1"/></svg>
<div style="position:absolute;left:0px;top:219px;width:1344px;height:38px;background:#f0f0f0"></div>
<div style="position:absolute;left:53px;top:219px;width:141px;height:38px;background:#e1e1e1"></div>
<div style="position:absolute;left:54px;top:257px;width:1290px;height:417px;background:#fff"></div>
<div style="position:absolute;left:0px;top:257px;width:53px;height:417px;background:#f0f0f0"></div>
<div style="position:absolute;left:0px;top:258px;width:53px;height:40px;background:#e1e1e1"></div>
<svg style="position:absolute;left:19px;top:223px" width="32" height="32" viewBox="0 0 32 32"><path d="M31 0.5 V31 H0.5 Z" fill="#dcdcdc"/></svg>
<div style="position:absolute;left:54px;top:298px;width:1290px;height:1px;background:#e1e1e1"></div>
<div style="position:absolute;left:0px;top:298px;width:53px;height:1px;background:#e1e1e1"></div>
<div style="position:absolute;left:54px;top:339px;width:1290px;height:1px;background:#e1e1e1"></div>
<div style="position:absolute;left:0px;top:339px;width:53px;height:1px;background:#e1e1e1"></div>
<div style="position:absolute;left:54px;top:380px;width:1290px;height:1px;background:#e1e1e1"></div>
<div style="position:absolute;left:0px;top:380px;width:53px;height:1px;background:#e1e1e1"></div>
<div style="position:absolute;left:54px;top:421px;width:1290px;height:1px;background:#e1e1e1"></div>
<div style="position:absolute;left:0px;top:421px;width:53px;height:1px;background:#e1e1e1"></div>
<div style="position:absolute;left:54px;top:462px;width:1290px;height:1px;background:#e1e1e1"></div>
<div style="position:absolute;left:0px;top:462px;width:53px;height:1px;background:#e1e1e1"></div>
<div style="position:absolute;left:54px;top:503px;width:1290px;height:1px;background:#e1e1e1"></div>
<div style="position:absolute;left:0px;top:503px;width:53px;height:1px;background:#e1e1e1"></div>
<div style="position:absolute;left:54px;top:544px;width:1290px;height:1px;background:#e1e1e1"></div>
<div style="position:absolute;left:0px;top:544px;width:53px;height:1px;background:#e1e1e1"></div>
<div style="position:absolute;left:54px;top:585px;width:1290px;height:1px;background:#e1e1e1"></div>
<div style="position:absolute;left:0px;top:585px;width:53px;height:1px;background:#e1e1e1"></div>
<div style="position:absolute;left:54px;top:626px;width:1290px;height:1px;background:#e1e1e1"></div>
<div style="position:absolute;left:0px;top:626px;width:53px;height:1px;background:#e1e1e1"></div>
<div style="position:absolute;left:54px;top:667px;width:1290px;height:1px;background:#e1e1e1"></div>
<div style="position:absolute;left:0px;top:667px;width:53px;height:1px;background:#e1e1e1"></div>
<div style="position:absolute;left:194px;top:257px;width:1px;height:417px;background:#e1e1e1"></div>
<div style="position:absolute;left:194px;top:219px;width:1px;height:38px;background:#d4d4d4"></div>
<div style="position:absolute;left:325px;top:257px;width:1px;height:417px;background:#e1e1e1"></div>
<div style="position:absolute;left:325px;top:219px;width:1px;height:38px;background:#d4d4d4"></div>
<div style="position:absolute;left:456px;top:257px;width:1px;height:417px;background:#e1e1e1"></div>
<div style="position:absolute;left:456px;top:219px;width:1px;height:38px;background:#d4d4d4"></div>
<div style="position:absolute;left:587px;top:257px;width:1px;height:417px;background:#e1e1e1"></div>
<div style="position:absolute;left:587px;top:219px;width:1px;height:38px;background:#d4d4d4"></div>
<div style="position:absolute;left:718px;top:257px;width:1px;height:417px;background:#e1e1e1"></div>
<div style="position:absolute;left:718px;top:219px;width:1px;height:38px;background:#d4d4d4"></div>
<div style="position:absolute;left:849px;top:257px;width:1px;height:417px;background:#e1e1e1"></div>
<div style="position:absolute;left:849px;top:219px;width:1px;height:38px;background:#d4d4d4"></div>
<div style="position:absolute;left:980px;top:257px;width:1px;height:417px;background:#e1e1e1"></div>
<div style="position:absolute;left:980px;top:219px;width:1px;height:38px;background:#d4d4d4"></div>
<div style="position:absolute;left:1111px;top:257px;width:1px;height:417px;background:#e1e1e1"></div>
<div style="position:absolute;left:1111px;top:219px;width:1px;height:38px;background:#d4d4d4"></div>
<div style="position:absolute;left:1242px;top:257px;width:1px;height:417px;background:#e1e1e1"></div>
<div style="position:absolute;left:1242px;top:219px;width:1px;height:38px;background:#d4d4d4"></div>
<div style="position:absolute;left:1344px;top:257px;width:1px;height:417px;background:#e1e1e1"></div>
<div style="position:absolute;left:0px;top:257px;width:1345px;height:1px;background:#b8b8b8"></div>
<div style="position:absolute;left:53px;top:219px;width:1px;height:455px;background:#bdbdbd"></div>
<div class="t" style="left:-76.0px;width:400px;text-align:center;top:226.6px;font-size:26.5px;line-height:26.5px;color:#107c41;font-weight:normal;transform:scaleX(0.86)">A</div>
<div class="t" style="left:60.0px;width:400px;text-align:center;top:226.6px;font-size:26.5px;line-height:26.5px;color:#444444;font-weight:normal;transform:scaleX(0.86)">B</div>
<div class="t" style="left:191.0px;width:400px;text-align:center;top:226.6px;font-size:26.5px;line-height:26.5px;color:#444444;font-weight:normal;transform:scaleX(0.86)">C</div>
<div class="t" style="left:322.0px;width:400px;text-align:center;top:226.6px;font-size:26.5px;line-height:26.5px;color:#444444;font-weight:normal;transform:scaleX(0.86)">D</div>
<div class="t" style="left:453.0px;width:400px;text-align:center;top:226.6px;font-size:26.5px;line-height:26.5px;color:#444444;font-weight:normal;transform:scaleX(0.86)">E</div>
<div class="t" style="left:584.0px;width:400px;text-align:center;top:226.6px;font-size:26.5px;line-height:26.5px;color:#444444;font-weight:normal;transform:scaleX(0.86)">F</div>
<div class="t" style="left:715.0px;width:400px;text-align:center;top:226.6px;font-size:26.5px;line-height:26.5px;color:#444444;font-weight:normal;transform:scaleX(0.86)">G</div>
<div class="t" style="left:846.0px;width:400px;text-align:center;top:226.6px;font-size:26.5px;line-height:26.5px;color:#444444;font-weight:normal;transform:scaleX(0.86)">H</div>
<div class="t" style="left:977.0px;width:400px;text-align:center;top:226.6px;font-size:26.5px;line-height:26.5px;color:#444444;font-weight:normal;transform:scaleX(0.86)">I</div>
<div class="t" style="left:1108.0px;width:400px;text-align:center;top:226.6px;font-size:26.5px;line-height:26.5px;color:#444444;font-weight:normal;transform:scaleX(0.86)">J</div>
<div class="t" style="left:-173.2px;width:400px;text-align:center;top:267.1px;font-size:27px;line-height:27px;color:#107c41;font-weight:normal;">1</div>
<div class="t" style="left:-173.2px;width:400px;text-align:center;top:308.1px;font-size:27px;line-height:27px;color:#444444;font-weight:normal;">2</div>
<div class="t" style="left:-173.2px;width:400px;text-align:center;top:349.1px;font-size:27px;line-height:27px;color:#444444;font-weight:normal;">3</div>
<div class="t" style="left:-173.2px;width:400px;text-align:center;top:390.1px;font-size:27px;line-height:27px;color:#444444;font-weight:normal;">4</div>
<div class="t" style="left:-173.2px;width:400px;text-align:center;top:431.1px;font-size:27px;line-height:27px;color:#444444;font-weight:normal;">5</div>
<div class="t" style="left:-173.2px;width:400px;text-align:center;top:472.1px;font-size:27px;line-height:27px;color:#444444;font-weight:normal;">6</div>
<div class="t" style="left:-173.2px;width:400px;text-align:center;top:513.1px;font-size:27px;line-height:27px;color:#444444;font-weight:normal;">7</div>
<div class="t" style="left:-173.2px;width:400px;text-align:center;top:554.1px;font-size:27px;line-height:27px;color:#444444;font-weight:normal;">8</div>
<div class="t" style="left:-173.2px;width:400px;text-align:center;top:595.1px;font-size:27px;line-height:27px;color:#444444;font-weight:normal;">9</div>
<div class="t" style="left:-173.2px;width:400px;text-align:center;top:636.1px;font-size:27px;line-height:27px;color:#444444;font-weight:normal;">10</div>
<div class="t" style="left:-210.0px;width:400px;text-align:right;top:266.1px;font-size:27.3px;line-height:27.3px;color:#000000;font-weight:normal;">1/1/2024</div>
<div style="position:absolute;left:52px;top:256px;width:144px;height:44px;box-sizing:border-box;border:2px solid #107c41"></div>
<div style="position:absolute;left:191px;top:295px;width:7px;height:7px;background:#fff"></div>
<div style="position:absolute;left:192px;top:296px;width:5px;height:5px;background:#107c41"></div>
<div style="position:absolute;left:1347px;top:219px;width:17px;height:457px;background:#f6f6f6;border-radius:8px"></div>
<svg style="position:absolute;left:1351px;top:224px" width="10" height="7" viewBox="0 0 10 7"><path d="M0.3 6.5 L4.75 0.3 L9.2 6.5 Z" fill="#6e6e6e" stroke="#6e6e6e" stroke-width="0.6" stroke-linejoin="round"/></svg>
<div style="position:absolute;left:1351px;top:236px;width:9px;height:194px;background:#707070;border-radius:4.5px"></div>
<svg style="position:absolute;left:1351px;top:665px" width="10" height="7" viewBox="0 0 10 7"><path d="M0.3 0.3 L4.75 6.5 L9.2 0.3 Z" fill="#6e6e6e" stroke="#6e6e6e" stroke-width="0.6" stroke-linejoin="round"/></svg>
<div style="position:absolute;left:0px;top:674px;width:1365px;height:32px;background:#f0f0f0"></div>
<svg style="position:absolute;left:28px;top:685px" width="8" height="10" viewBox="0 0 8 10"><path d="M6.5 0.5 L1.5 4.7 L6.5 9" fill="none" stroke="#8a8a8a" stroke-width="1.1"/></svg>
<svg style="position:absolute;left:60px;top:685px" width="8" height="10" viewBox="0 0 8 10"><path d="M1.5 0.5 L6.5 4.7 L1.5 9" fill="none" stroke="#8a8a8a" stroke-width="1.1"/></svg>
<div class="t" style="left:124.5px;top:684.5px;font-size:13px;line-height:13px;color:#262626;font-weight:normal;">Sheet2</div>
<div style="position:absolute;left:179px;top:681px;width:1px;height:18px;background:#c8c8c8"></div>
<div style="position:absolute;left:184px;top:673px;width:57px;height:29px;box-sizing:border-box;background:#fff;border:1px solid #e3e3e3;border-top:none;border-radius:0 0 5px 5px"></div>
<div class="t" style="left:192.0px;top:681.9px;font-size:12.5px;line-height:12.5px;color:#262626;font-weight:bold;">Sheet1</div>
<div style="position:absolute;left:192px;top:697px;width:41px;height:2px;background:#107c41"></div>
<div style="position:absolute;left:245px;top:681px;width:1px;height:18px;background:#c8c8c8"></div>
<svg style="position:absolute;left:287px;top:684px" width="12" height="12" viewBox="0 0 12 12"><path d="M6 0 V11 M0.5 5.5 H11.5" stroke="#424242" stroke-width="1.1"/></svg>
<div style="position:absolute;left:821px;top:685px;width:2px;height:2px;background:#9a9a9a"></div>
<div style="position:absolute;left:821px;top:689px;width:2px;height:2px;background:#9a9a9a"></div>
<div style="position:absolute;left:821px;top:693px;width:2px;height:2px;background:#9a9a9a"></div>
<div style="position:absolute;left:838px;top:681px;width:509px;height:17px;background:#f5f5f5;border-radius:8px"></div>
<svg style="position:absolute;left:842px;top:685px" width="8" height="10" viewBox="0 0 8 10"><path d="M7.3 0.4 V9.2 L0.6 4.8 Z" fill="#6e6e6e" stroke="#6e6e6e" stroke-width="0.6" stroke-linejoin="round"/></svg>
<div style="position:absolute;left:855px;top:685px;width:463px;height:9px;background:#767676;border-radius:4.5px"></div>
<svg style="position:absolute;left:1335px;top:685px" width="8" height="10" viewBox="0 0 8 10"><path d="M0.7 0.4 V9.2 L7.4 4.8 Z" fill="#6e6e6e" stroke="#6e6e6e" stroke-width="0.6" stroke-linejoin="round"/></svg>
<div style="position:absolute;left:0px;top:706px;width:1365px;height:22px;background:#f3f3f3"></div>
<div style="position:absolute;left:0px;top:728px;width:1365px;height:3px;background:linear-gradient(90deg,#d4d2e4,#d8d4e6 40%,#ddd6e2 70%,#e3d8df)"></div>
<div style="position:absolute;left:441px;top:728px;width:48px;height:3px;background:#e9e8f0"></div>
<div class="t" style="left:12.5px;top:711.9px;font-size:10.8px;line-height:10.8px;color:#404040;font-weight:normal;">Ready</div>
<svg style="position:absolute;left:61px;top:709px" width="16" height="16" viewBox="0 0 16 16">
<circle cx="7" cy="2.5" r="1.8" fill="none" stroke="#262626" stroke-width="1.1"/>
<path d="M1 5 C4 6 10 6 13 5 M7 6 V9 M7 9 L4 15 M7 9 L8 11" fill="none" stroke="#262626" stroke-width="1.2" stroke-linecap="round"/>
<path d="M9 10 L15 15.5 M15 10 L9 15.5" stroke="#262626" stroke-width="1.1"/>
</svg>
<div class="t" style="left:81.0px;top:712.1px;font-size:10.5px;line-height:10.5px;color:#262626;font-weight:bold;">Accessibility: Investigate</div>
<div style="position:absolute;left:1066px;top:707px;width:40px;height:21px;background:#e1e1e1"></div>
<svg style="position:absolute;left:1079px;top:710px" width="14" height="14" viewBox="0 0 14 14"><path d="M0.6 0.6 H12.6 V12.6 H0.6 Z M0.6 4.6 H12.6 M0.6 8.6 H12.6 M4.6 0.6 V12.6 M8.6 0.6 V12.6" fill="none" stroke="#262626" stroke-width="1.2"/></svg>
<svg style="position:absolute;left:1119px;top:710px" width="15" height="14" viewBox="0 0 15 14"><rect x="0.6" y="0.6" width="13" height="12" fill="none" stroke="#262626" stroke-width="1.2"/><rect x="4.1" y="3.6" width="6" height="6.2" fill="none" stroke="#262626" stroke-width="1"/><path d="M5.5 5.6 H8.7 M5.5 7.6 H8.7" stroke="#262626" stroke-width="0.8"/></svg>
<svg style="position:absolute;left:1159px;top:710px" width="15" height="14" viewBox="0 0 15 14"><path d="M0.6 0.6 H13.6 V12.6 H0.6 Z M0.6 6.8 H9.3 V0.6 M4.8 0.6 V6.8" fill="none" stroke="#262626" stroke-width="1.2"/></svg>
<div style="position:absolute;left:1192px;top:716px;width:8px;height:1.3px;background:#262626"></div>
<div style="position:absolute;left:1205px;top:717px;width:100px;height:1px;background:#7a7a7a"></div>
<div style="position:absolute;left:1255px;top:714px;width:1px;height:7px;background:#7a7a7a"></div>
<div style="position:absolute;left:1270px;top:711px;width:5px;height:12px;background:#6e6e6e"></div>
<svg style="position:absolute;left:1310px;top:713px" width="9" height="9" viewBox="0 0 9 9"><path d="M4.2 0 V8.4 M0 4.2 H8.4" stroke="#262626" stroke-width="1.2"/></svg>
<div class="t" style="left:1331.0px;top:712.2px;font-size:10.8px;line-height:10.8px;color:#404040;font-weight:normal;">205%</div>
<div style="position:absolute;left:477px;top:278px;width:278px;height:229px;box-sizing:border-box;background:#f0f0f0;border:1px solid #6f6f6f;box-shadow:0 4px 16px rgba(0,0,0,0.26)"></div>
<div style="position:absolute;left:478px;top:279px;width:276px;height:30px;background:#fff"></div>
<div class="t" style="left:486.0px;top:288.8px;font-size:11.5px;line-height:11.5px;color:#000;font-weight:normal;">Series</div>
<div class="t" style="left:682.8px;top:287.4px;font-size:12.5px;line-height:12.5px;color:#000;font-weight:normal;transform:scaleX(0.9)">?</div>
<svg style="position:absolute;left:726px;top:288px" width="10" height="10" viewBox="0 0 10 10"><path d="M0.3 0.3 L9.7 9.7 M9.7 0.3 L0.3 9.7" stroke="#000" stroke-width="1.1"/></svg>
<div style="position:absolute;left:484px;top:322px;width:82px;height:92px;box-sizing:border-box;border:1px solid #dcdcdc"></div>
<div class="t" style="left:489px;top:317.5px;font-size:11.2px;line-height:11.2px;color:#000;background:#f0f0f0;padding:0 1px">Series in</div>
<div style="position:absolute;left:576px;top:322px;width:77px;height:92px;box-sizing:border-box;border:1px solid #dcdcdc"></div>
<div class="t" style="left:581.5px;top:317.5px;font-size:11.2px;line-height:11.2px;color:#000;background:#f0f0f0;padding:0 1px">Type</div>
<div style="position:absolute;left:663px;top:322px;width:84px;height:92px;box-sizing:border-box;border:1px solid #dcdcdc"></div>
<div class="t" style="left:668.5px;top:317.5px;font-size:11.2px;line-height:11.2px;color:#000;background:#f0f0f0;padding:0 1px">Date unit</div>
<svg style="position:absolute;left:492px;top:337px" width="14" height="14" viewBox="0 0 14 14"><circle cx="7" cy="7" r="6.2" fill="#fff" stroke="#333" stroke-width="1"/></svg>
<div class="t" style="left:510.5px;top:338.5px;font-size:11.2px;line-height:11.2px;color:#000;font-weight:normal;"><u>R</u>ows</div>
<svg style="position:absolute;left:492px;top:356px" width="14" height="14" viewBox="0 0 14 14"><circle cx="7" cy="7" r="6.2" fill="#fff" stroke="#333" stroke-width="1"/><circle cx="7" cy="7" r="3.6" fill="#333"/></svg>
<div class="t" style="left:510.5px;top:357.5px;font-size:11.2px;line-height:11.2px;color:#000;font-weight:normal;"><u>C</u>olumns</div>
<svg style="position:absolute;left:584px;top:337px" width="14" height="14" viewBox="0 0 14 14"><circle cx="7" cy="7" r="6.2" fill="#fff" stroke="#333" stroke-width="1"/></svg>
<div class="t" style="left:602.5px;top:338.5px;font-size:11.2px;line-height:11.2px;color:#000;font-weight:normal;"><u>L</u>inear</div>
<svg style="position:absolute;left:584px;top:356px" width="14" height="14" viewBox="0 0 14 14"><circle cx="7" cy="7" r="6.2" fill="#fff" stroke="#333" stroke-width="1"/></svg>
<div class="t" style="left:602.5px;top:357.5px;font-size:11.2px;line-height:11.2px;color:#000;font-weight:normal;"><u>G</u>rowth</div>
<svg style="position:absolute;left:584px;top:375px" width="14" height="14" viewBox="0 0 14 14"><circle cx="7" cy="7" r="6.2" fill="#fff" stroke="#333" stroke-width="1"/><circle cx="7" cy="7" r="3.6" fill="#333"/></svg>
<div class="t" style="left:602.5px;top:376.5px;font-size:11.2px;line-height:11.2px;color:#000;font-weight:normal;"><u>D</u>ate</div>
<svg style="position:absolute;left:584px;top:394px" width="14" height="14" viewBox="0 0 14 14"><circle cx="7" cy="7" r="6.2" fill="#fff" stroke="#333" stroke-width="1"/></svg>
<div class="t" style="left:602.5px;top:395.5px;font-size:11.2px;line-height:11.2px;color:#000;font-weight:normal;">Auto<u>F</u>ill</div>
<svg style="position:absolute;left:671px;top:337px" width="14" height="14" viewBox="0 0 14 14"><circle cx="7" cy="7" r="6.2" fill="#fff" stroke="#333" stroke-width="1"/><circle cx="7" cy="7" r="3.6" fill="#333"/></svg>
<div class="t" style="left:689.5px;top:338.5px;font-size:11.2px;line-height:11.2px;color:#000;font-weight:normal;">D<u>a</u>y</div>
<svg style="position:absolute;left:671px;top:356px" width="14" height="14" viewBox="0 0 14 14"><circle cx="7" cy="7" r="6.2" fill="#fff" stroke="#333" stroke-width="1"/></svg>
<div class="t" style="left:689.5px;top:357.5px;font-size:11.2px;line-height:11.2px;color:#000;font-weight:normal;"><u>W</u>eekday</div>
<svg style="position:absolute;left:671px;top:375px" width="14" height="14" viewBox="0 0 14 14"><circle cx="7" cy="7" r="6.2" fill="#fff" stroke="#333" stroke-width="1"/></svg>
<div class="t" style="left:689.5px;top:376.5px;font-size:11.2px;line-height:11.2px;color:#000;font-weight:normal;"><u>M</u>onth</div>
<svg style="position:absolute;left:671px;top:394px" width="14" height="14" viewBox="0 0 14 14"><circle cx="7" cy="7" r="6.2" fill="#fff" stroke="#333" stroke-width="1"/></svg>
<div class="t" style="left:689.5px;top:395.5px;font-size:11.2px;line-height:11.2px;color:#000;font-weight:normal;"><u>Y</u>ear</div>
<div style="position:absolute;left:484px;top:425px;width:13px;height:13px;box-sizing:border-box;background:#fff;border:1px solid #333"></div>
<div class="t" style="left:501.0px;top:426.5px;font-size:11.2px;line-height:11.2px;color:#000;font-weight:normal;"><u>T</u>rend</div>
<div class="t" style="left:484.0px;top:452.5px;font-size:11.2px;line-height:11.2px;color:#000;font-weight:normal;"><u>S</u>tep value:</div>
<div style="position:absolute;left:549px;top:448px;width:62px;height:20px;box-sizing:border-box;background:#fff;border:1px solid #7a7a7a"></div>
<div class="t" style="left:552.5px;top:452.5px;font-size:11.2px;line-height:11.2px;color:#000;font-weight:normal;">1</div>
<div class="t" style="left:620.5px;top:452.5px;font-size:11.2px;line-height:11.2px;color:#000;font-weight:normal;">St<u>o</u>p value:</div>
<div style="position:absolute;left:686px;top:448px;width:62px;height:20px;box-sizing:border-box;background:#fff;border:1px solid #7a7a7a"></div>
<div class="t" style="left:689.0px;top:452.6px;font-size:11.1px;line-height:11.1px;color:#000;font-weight:normal;">12/31/2025</div>
<div style="position:absolute;left:589px;top:476px;width:74px;height:22px;box-sizing:border-box;background:#e1e1e1;border:2px solid #0078d7"></div>
<div class="t" style="left:426.0px;width:400px;text-align:center;top:481.5px;font-size:11.2px;line-height:11.2px;color:#000;font-weight:normal;">OK</div>
<div style="position:absolute;left:673px;top:476px;width:74px;height:22px;box-sizing:border-box;background:#e1e1e1;border:1px solid #adadad"></div>
<div class="t" style="left:510.0px;width:400px;text-align:center;top:481.5px;font-size:11.2px;line-height:11.2px;color:#000;font-weight:normal;">Cancel</div>
<svg style="position:absolute;left:620px;top:500px" width="30" height="130" viewBox="0 0 30 130"><path d="M11.6 125 L14.6 17" stroke="#ff0000" stroke-width="3.4" stroke-linecap="round"/><path d="M15.4 3.6 L10.4 19.5 L19.9 19.5 Z" fill="#ff0000"/></svg>
</body></html>
